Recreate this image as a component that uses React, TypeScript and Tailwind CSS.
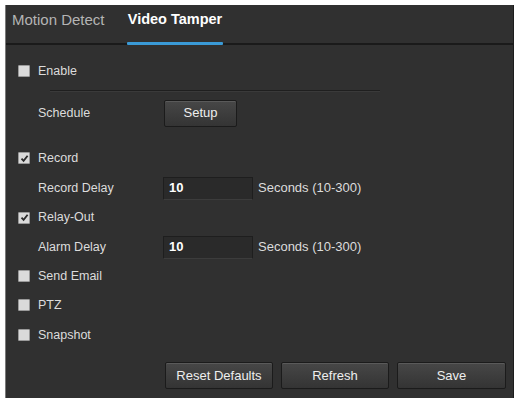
import React from "react";

const font = { fontFamily: '"Liberation Sans", Arial, sans-serif' };

function Box({ checked }: { checked?: boolean }) {
  return (
    <div className="w-[12px] h-[12px] bg-[#dadada] border border-[#9a9a9a] rounded-[1px] flex items-center justify-center shrink-0">
      {checked && (
        <svg width="9" height="9" viewBox="0 0 9 9">
          <path d="M1.5 4.6 L3.6 6.8 L7.6 1.8" stroke="#2a2a2a" strokeWidth="1.8" fill="none" />
        </svg>
      )}
    </div>
  );
}

function CheckRow({ label, checked, h }: { label: string; checked?: boolean; h: string }) {
  return (
    <div className={`flex items-center pl-[12px] gap-[8px] ${h}`}>
      <Box checked={checked} />
      <span className="text-[12.5px] text-[#dcdcdc]">{label}</span>
    </div>
  );
}

function DelayRow({ label, h }: { label: string; h: string }) {
  return (
    <div className={`flex items-center pl-[32px] ${h}`}>
      <span className="w-[125px] text-[12.5px] text-[#dcdcdc]">{label}</span>
      <div className="w-[90px] h-[23px] bg-[#2a2a2a] border border-[#1e1e1e] border-b-[#3c3c3c] flex items-center pl-[5px] text-[13px] text-white font-bold">
        10
      </div>
      <span className="ml-[5px] text-[13px] text-[#dcdcdc]">Seconds (10-300)</span>
    </div>
  );
}

function Btn({ label, w }: { label: string; w: string }) {
  return (
    <div
      className={`${w} h-[27px] flex items-center justify-center text-[13px] text-[#eeeeee] border border-[#1b1b1b] rounded-[2px] bg-gradient-to-b from-[#474747] to-[#343434] shadow-[inset_0_1px_0_#5a5a5a]`}
    >
      {label}
    </div>
  );
}

export default function App() {
  return (
    <div className="w-[518px] h-[398px] bg-white pt-[5px] pl-[5px] pr-[4px] overflow-hidden" style={font}>
      <div className="w-full h-[393px] bg-[#303030] border-l border-[#7a7a7a] border-r border-r-[#1c1c1c] flex flex-col">
        <div className="h-[38px] flex items-end relative">
          <div className="h-[38px] pl-[6px] w-[121px] flex items-start pt-[4px] text-[15px] text-[#b4b4b4]">
            Motion Detect
          </div>
          <div className="h-[38px] w-[96px] relative flex items-start justify-center pt-[4px] text-[14.5px] font-bold text-white">
            Video Tamper
            <div className="absolute left-0 right-0 bottom-[-2px] h-[3px] bg-[#3a9ad6] rounded-[1px]" />
          </div>
        </div>
        <div className="h-[2px] bg-[#1a1a1a]" />
        <div className="flex flex-col pt-[11px]">
          <CheckRow label="Enable" h="h-[30px]" />
          <div className="mt-[4px] ml-[44px] w-[330px] h-[1px] bg-[#1f1f1f] border-b border-[#3a3a3a] box-content" />
          <div className="mt-[6px] h-[30px] flex items-center pl-[32px]">
            <span className="w-[126px] text-[12.5px] text-[#dcdcdc]">Schedule</span>
            <Btn label="Setup" w="w-[73px]" />
          </div>
          <div className="mt-[15px]">
            <CheckRow label="Record" checked h="h-[30px]" />
          </div>
          <DelayRow label="Record Delay" h="h-[30px]" />
          <CheckRow label="Relay-Out" checked h="h-[29px]" />
          <DelayRow label="Alarm Delay" h="h-[30px]" />
          <CheckRow label="Send Email" h="h-[28px]" />
          <CheckRow label="PTZ" h="h-[30px]" />
          <CheckRow label="Snapshot" h="h-[30px]" />
          <div className="mt-[12px] flex pl-[159px] gap-[8px]">
            <Btn label="Reset Defaults" w="w-[108px]" />
            <Btn label="Refresh" w="w-[108px]" />
            <Btn label="Save" w="w-[109px]" />
          </div>
        </div>
      </div>
    </div>
  );
}
